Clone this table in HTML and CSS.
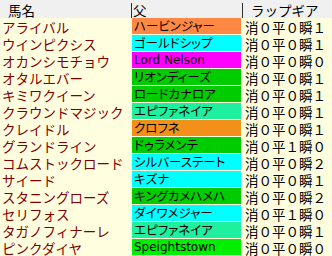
FILE: index.html
```html
<!DOCTYPE html>
<html lang="ja">
<head>
<meta charset="utf-8">
<link rel="stylesheet" href="styles.css">
</head>
<body>
<div class="table">
  <div class="hd hd-name">馬名</div>
  <div class="hd hd-sire">父</div>
  <div class="hd hd-gear">ラップギア</div>

  <div class="name">アライバル</div><div class="sire"><span class="c orange">ハービンジャー</span></div><div class="gear">消０平０瞬１</div>
  <div class="name">ウインピクシス</div><div class="sire"><span class="c cyan">ゴールドシップ</span></div><div class="gear">消０平０瞬１</div>
  <div class="name">オカンシモチョウ</div><div class="sire"><span class="c magenta latin">Lord Nelson</span></div><div class="gear">消０平０瞬０</div>
  <div class="name">オタルエバー</div><div class="sire"><span class="c green">リオンディーズ</span></div><div class="gear">消０平０瞬１</div>
  <div class="name">キミワクイーン</div><div class="sire"><span class="c green">ロードカナロア</span></div><div class="gear">消０平０瞬１</div>
  <div class="name">クラウンドマジック</div><div class="sire"><span class="c spring">エピファネイア</span></div><div class="gear">消０平０瞬１</div>
  <div class="name">クレイドル</div><div class="sire"><span class="c amber">クロフネ</span></div><div class="gear">消０平０瞬１</div>
  <div class="name">グランドライン</div><div class="sire"><span class="c green">ドゥラメンテ</span></div><div class="gear">消０平１瞬０</div>
  <div class="name">コムストックロード</div><div class="sire"><span class="c cyan">シルバーステート</span></div><div class="gear">消０平０瞬２</div>
  <div class="name">サイード</div><div class="sire"><span class="c cyan">キズナ</span></div><div class="gear">消０平０瞬１</div>
  <div class="name">スタニングローズ</div><div class="sire"><span class="c green">キングカメハメハ</span></div><div class="gear">消０平０瞬２</div>
  <div class="name">セリフォス</div><div class="sire"><span class="c cyan">ダイワメジャー</span></div><div class="gear">消０平１瞬０</div>
  <div class="name">タガノフィナーレ</div><div class="sire"><span class="c spring">エピファネイア</span></div><div class="gear">消０平０瞬１</div>
  <div class="name">ピンクダイヤ</div><div class="sire"><span class="c lime latin">Speightstown</span></div><div class="gear">消０平０瞬０</div>
</div>
</body>
</html>
```
FILE: styles.css
```css
html, body {
  margin: 0;
  padding: 0;
  background: #ffffe0;
}
.table {
  display: grid;
  grid-template-columns: 131px 111px 90px;
  grid-template-rows: 18px repeat(14, 17px);
  width: 332px;
  height: 256px;
  overflow: hidden;
  font-family: "Noto Sans CJK JP", sans-serif;
  font-size: 13.5px;
  line-height: 16px;
}
.hd {
  background: #f0f0f0;
  color: #000;
  display: flex;
  align-items: center;
  padding-top: 2px;
}
.hd-name { padding-left: 8px; }
.hd-sire,
.hd-gear {
  background: linear-gradient(#303030, #303030) no-repeat 0 3px / 1px 15px, #f0f0f0;
}
.hd-sire { padding-left: 2px; }
.hd-gear { padding-left: 9px; }
.name {
  color: #800000;
  padding-left: 2px;
  display: flex;
  align-items: center;
  white-space: nowrap;
}
.sire {
  display: flex;
  padding: 0 1px 1px 1px;
}
.c {
  flex: 1;
  display: flex;
  align-items: center;
  padding-left: 2px;
  font-size: 12.5px;
  font-feature-settings: "palt";
  color: #000;
  white-space: nowrap;
}
.latin { font-family: "DejaVu Sans", sans-serif; font-size: 12px; }
.orange { background: #ff8844; }
.amber { background: #f39019; }
.cyan { background: #00ffff; }
.magenta { background: #ff00ff; }
.green { background: #00cc00; }
.spring { background: #1ef0a0; }
.lime { background: #00ee00; }
.gear {
  display: flex;
  align-items: center;
  padding-left: 3px;
  color: #000;
  white-space: nowrap;
}
```
